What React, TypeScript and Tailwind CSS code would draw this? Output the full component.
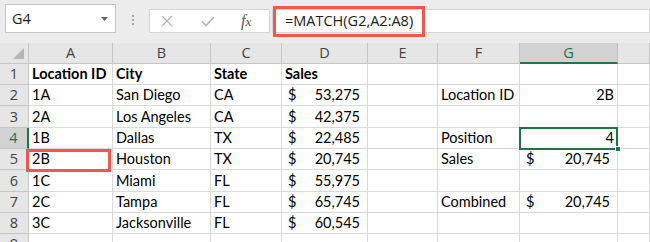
import React from "react";

const widths = [29, 84, 98, 71, 86, 70, 82, 98, 32];
const letters = ["", "A", "B", "C", "D", "E", "F", "G", ""];
const heights = [21, 21, 22, 21, 21, 22, 21, 21, 21];

type Cell = { t?: string; bold?: boolean; right?: boolean; money?: string };

const rows: Cell[][] = [
  [{ t: "Location ID", bold: true }, { t: "City", bold: true }, { t: "State", bold: true }, { t: "Sales", bold: true }, {}, {}, {}, {}],
  [{ t: "1A" }, { t: "San Diego" }, { t: "CA" }, { money: "53,275" }, {}, { t: "Location ID" }, { t: "2B", right: true }, {}],
  [{ t: "2A" }, { t: "Los Angeles" }, { t: "CA" }, { money: "42,375" }, {}, {}, {}, {}],
  [{ t: "1B" }, { t: "Dallas" }, { t: "TX" }, { money: "22,485" }, {}, { t: "Position" }, { t: "4", right: true }, {}],
  [{ t: "2B" }, { t: "Houston" }, { t: "TX" }, { money: "20,745" }, {}, { t: "Sales" }, { money: "20,745" }, {}],
  [{ t: "1C" }, { t: "Miami" }, { t: "FL" }, { money: "55,975" }, {}, {}, {}, {}],
  [{ t: "2C" }, { t: "Tampa" }, { t: "FL" }, { money: "65,745" }, {}, { t: "Combined" }, { money: "20,745" }, {}],
  [{ t: "3C" }, { t: "Jacksonville" }, { t: "FL" }, { money: "60,545" }, {}, {}, {}, {}],
  [{}, {}, {}, {}, {}, {}, {}, {}],
];

function DataCell({ c, w, r, col }: { c: Cell; w: number; r: number; col: number }) {
  const isA5 = r === 4 && col === 0;
  const isG4 = r === 3 && col === 6;
  return (
    <div
      className="relative h-full shrink-0 border-r border-b border-[#dadada] flex items-end pb-[1px] text-[14.5px] leading-[18px] text-black"
      style={{ width: w }}
    >
      {c.money ? (
        <div className="flex w-full justify-between pl-[6px] pr-[7px]">
          <span>$</span>
          <span>{c.money}</span>
        </div>
      ) : (
        <span className={`w-full whitespace-nowrap px-[3px] ${c.bold ? "font-bold" : ""} ${c.right ? "text-right" : ""}`}>
          {c.t}
        </span>
      )}
      {isA5 && <div className="absolute z-10 left-[-3px] top-[0px] w-[85px] h-[23px] border-[3px] border-[#f0584b]" />}
      {isG4 && (
        <>
          <div className="absolute z-10 left-[-1px] top-[-1px] w-[99px] h-[23px] border-2 border-[#217346]" />
          <div className="absolute z-20 right-[-4px] bottom-[-4px] w-[6px] h-[6px] bg-[#217346] border border-white" />
        </>
      )}
    </div>
  );
}

export default function App() {
  return (
    <div className="w-[650px] h-[242px] overflow-hidden bg-white font-['Lato',sans-serif]">
      {/* formula bar */}
      <div className="h-[43px] bg-[#ececec] flex items-start pt-[4px] font-['Open_Sans',sans-serif]">
        <div className="ml-[5px] w-[111px] h-[29px] bg-white border border-[#c6c6c6] flex items-center justify-between pl-[6px] pr-[7px]">
          <span className="text-[14.5px] text-[#222]">G4</span>
          <svg width="7" height="4" viewBox="0 0 7 4"><path d="M0 0h7L3.5 4z" fill="#666" /></svg>
        </div>
        <div className="w-[33px] h-[29px] flex flex-col items-center justify-center gap-[2px] pt-[2px]">
          <span className="w-[2px] h-[2px] bg-[#a8a8a8]" />
          <span className="w-[2px] h-[2px] bg-[#a8a8a8]" />
          <span className="w-[2px] h-[2px] bg-[#a8a8a8]" />
        </div>
        <div className="mt-[5px] w-[121px] h-[24px] bg-white border border-[#d6d6d6] flex items-center">
          <svg className="ml-[11px]" width="12" height="12" viewBox="0 0 12 12">
            <path d="M1 1l10 10M11 1L1 11" stroke="#b3b3b3" strokeWidth="1.2" />
          </svg>
          <svg className="ml-[28px]" width="14" height="11" viewBox="0 0 14 11">
            <path d="M1 5.5l4 4L13 1" stroke="#b3b3b3" strokeWidth="1.6" fill="none" />
          </svg>
          <span className="ml-[26px] font-['Liberation_Serif',serif] italic text-[16px] text-[#555] leading-none">
            f<span className="text-[13px]">x</span>
          </span>
        </div>
        <div className="relative ml-[2px] mt-[5px] flex-1 h-[24px] bg-white border border-[#d6d6d6] flex items-center pl-[12px]">
          <span className="text-[14.5px] text-[#222]">=MATCH(G2,A2:A8)</span>
          <div className="absolute left-[0px] top-[-4px] w-[152px] h-[31px] border-[3px] border-[#f0584b]" />
        </div>
      </div>

      {/* column headers */}
      <div className="flex h-[21px] bg-[#e6e6e6] font-['Open_Sans',sans-serif] text-[14.5px] text-[#444]">
        {widths.map((w, i) => (
          <div
            key={i}
            className={`shrink-0 h-full flex items-center justify-center border-r border-b ${
              i === 7 ? "bg-[#d2d2d2] text-[#217346] border-b-2 border-b-[#217346] border-r-[#c0c0c0]" : "border-[#c6c6c6]"
            } ${i === 0 ? "relative" : ""}`}
            style={{ width: w }}
          >
            {i === 0 ? (
              <svg className="absolute right-[4px] bottom-[4px]" width="11" height="11" viewBox="0 0 11 11">
                <path d="M11 0V11H0z" fill="#b5b5b5" />
              </svg>
            ) : (
              letters[i]
            )}
          </div>
        ))}
      </div>

      {/* rows */}
      {rows.map((row, r) => (
        <div key={r} className="flex" style={{ height: heights[r] }}>
          <div
            className={`shrink-0 w-[29px] h-full flex items-center justify-center font-['Open_Sans',sans-serif] text-[14.5px] border-b border-[#c6c6c6] ${
              r === 3
                ? "bg-[#d2d2d2] text-[#217346] border-r-2 border-r-[#217346]"
                : "bg-[#e6e6e6] text-[#444] border-r"
            }`}
          >
            {r + 1}
          </div>
          {row.map((c, col) => (
            <DataCell key={col} c={c} w={widths[col + 1]} r={r} col={col} />
          ))}
        </div>
      ))}
    </div>
  );
}
